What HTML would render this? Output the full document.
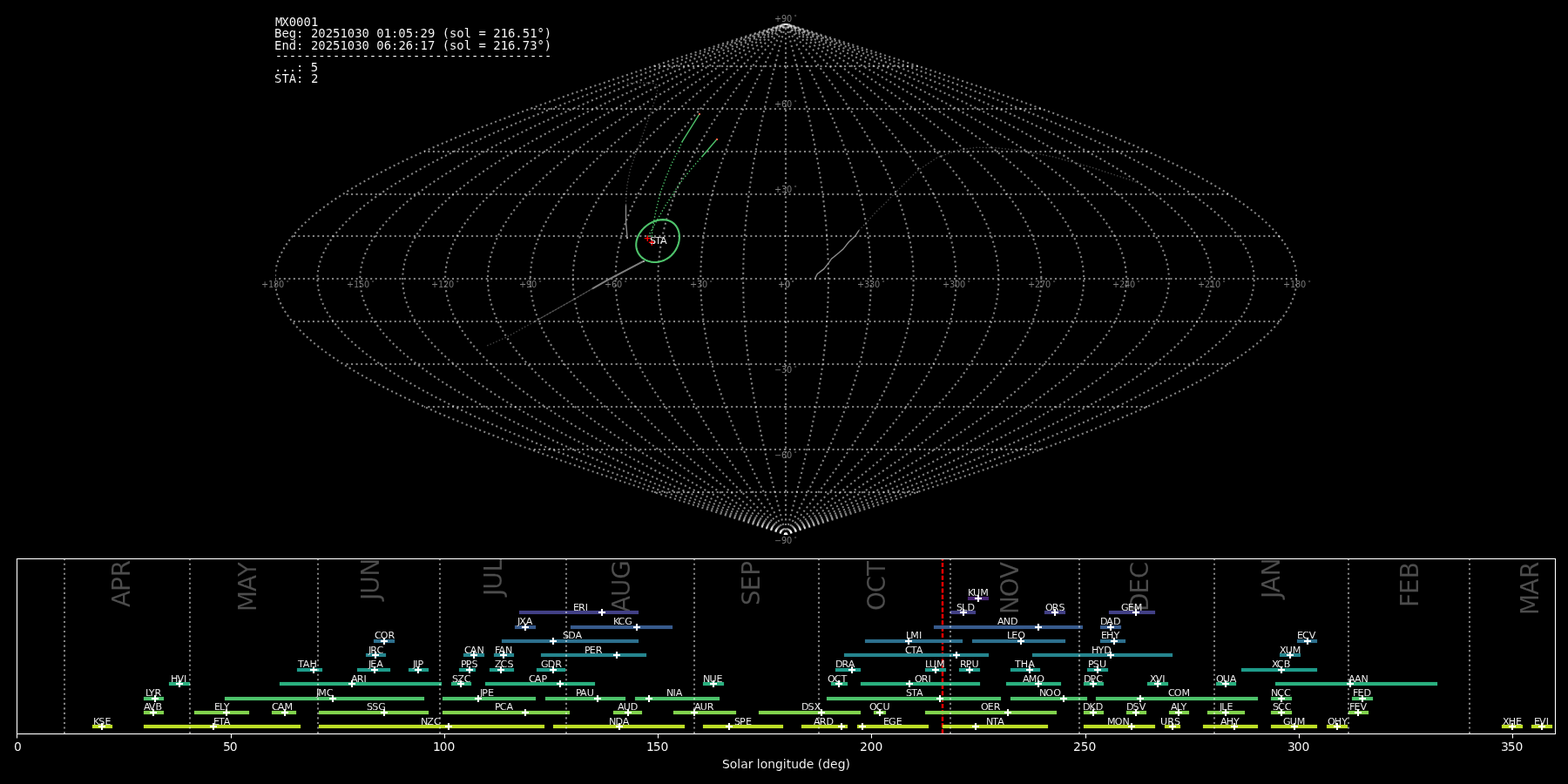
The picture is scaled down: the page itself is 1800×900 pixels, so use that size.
<!DOCTYPE html>
<html lang="en"><head><meta charset="utf-8"><title>MX0001 shower association</title>
<style>html,body{margin:0;padding:0;background:#000;}body{width:1800px;height:900px;overflow:hidden;}svg{display:block;}text{font-family:"DejaVu Sans","Liberation Sans",sans-serif;}.m{font-family:"DejaVu Sans Mono","Liberation Mono",monospace;font-size:13.889px;fill:#fff;}.m,.s,.t,.mo{stroke:#000;stroke-width:0.1;paint-order:fill stroke;}.g{fill:#808080;font-size:9.722px;}.gs{fill:#808080;font-size:6.806px;}.g,.gs{stroke:#000;stroke-width:0.05;paint-order:fill stroke;}.s{fill:#fff;font-size:11.111px;text-anchor:middle;}.s2{fill:#fff;font-size:11.111px;stroke:#000;stroke-width:0.1;paint-order:fill stroke;}.mo{fill:#fff;fill-opacity:0.3;font-size:27.778px;}.t{fill:#fff;font-size:13.889px;text-anchor:middle;}.t2{fill:#fff;font-size:13.889px;}.s3{fill:#fff;font-size:11.111px;}.s3,.t2{stroke:#000;stroke-width:0.1;paint-order:fill stroke;}.gl{fill:none;stroke:#fff;stroke-opacity:0.5;stroke-width:2.0833;stroke-dasharray:2.0833 3.4375;}.gp{fill:none;stroke:#fff;stroke-opacity:0.5;stroke-width:2;stroke-dasharray:2.0833 3.4375;}.gh{fill:none;stroke:#fff;stroke-opacity:0.0208;stroke-width:4;stroke-dasharray:2.0833 3.4375;}svg{will-change:transform;}.ml{fill:none;stroke:#fff;stroke-opacity:0.5;stroke-width:2.0833;stroke-dasharray:2.0833 3.4375;}</style></head><body>
<svg width="1800" height="900" viewBox="0 0 1800 900">
<rect x="0" y="0" width="1800" height="900" fill="#000"/>
<defs><clipPath id="ct"><rect x="316" y="27" width="1173" height="587"/></clipPath>
<clipPath id="cb"><rect x="19" y="641" width="1766" height="201"/></clipPath></defs>
<g clip-path="url(#ct)">
<path class="gh" d="M902 565H750"/>
<path class="gh" d="M1054 565H902"/>
<path class="gp" d="M902 565H750"/>
<path class="gp" d="M1054 565H902"/>
<path class="gh" d="M902 516H609"/>
<path class="gh" d="M1195 516H902"/>
<path class="gp" d="M902 516H609"/>
<path class="gp" d="M1195 516H902"/>
<path class="gh" d="M902 467H487"/>
<path class="gh" d="M1317 467H902"/>
<path class="gp" d="M902 467H487"/>
<path class="gp" d="M1317 467H902"/>
<path class="gh" d="M902 418H394"/>
<path class="gh" d="M1410 418H902"/>
<path class="gp" d="M902 418H394"/>
<path class="gp" d="M1410 418H902"/>
<path class="gh" d="M902 369H336"/>
<path class="gh" d="M1469 369H902"/>
<path class="gp" d="M902 369H336"/>
<path class="gp" d="M1469 369H902"/>
<path class="gh" d="M902 320H316"/>
<path class="gh" d="M1489 320H902"/>
<path class="gp" d="M902 320H316"/>
<path class="gp" d="M1489 320H902"/>
<path class="gh" d="M902 271H336"/>
<path class="gh" d="M1469 271H902"/>
<path class="gp" d="M902 271H336"/>
<path class="gp" d="M1469 271H902"/>
<path class="gh" d="M902 223H394"/>
<path class="gh" d="M1410 223H902"/>
<path class="gp" d="M902 223H394"/>
<path class="gp" d="M1410 223H902"/>
<path class="gh" d="M902 174H487"/>
<path class="gh" d="M1317 174H902"/>
<path class="gp" d="M902 174H487"/>
<path class="gp" d="M1317 174H902"/>
<path class="gh" d="M902 125H609"/>
<path class="gh" d="M1195 125H902"/>
<path class="gp" d="M902 125H609"/>
<path class="gp" d="M1195 125H902"/>
<path class="gh" d="M902 76H750"/>
<path class="gh" d="M1054 76H902"/>
<path class="gp" d="M902 76H750"/>
<path class="gp" d="M1054 76H902"/>
<path class="gl" d="M902 614V27"/>
<path class="gl" d="M902.05 613.57L900.5 607.64L898.95 601.72L897.4 595.79L895.86 589.87L894.33 583.94L892.8 578.02L891.28 572.09L889.77 566.17L888.28 560.24L886.8 554.32L885.33 548.39L883.88 542.47L882.45 536.55L881.04 530.62L879.65 524.7L878.29 518.77L876.94 512.85L875.62 506.92L874.33 501L873.07 495.07L871.84 489.15L870.63 483.23L869.46 477.3L868.32 471.38L867.22 465.45L866.14 459.53L865.11 453.6L864.11 447.68L863.16 441.75L862.24 435.83L861.36 429.9L860.52 423.98L859.72 418.06L858.97 412.13L858.26 406.21L857.59 400.28L856.97 394.36L856.39 388.43L855.86 382.51L855.38 376.58L854.94 370.66L854.55 364.73L854.21 358.81L853.92 352.88L853.67 346.96L853.47 341.04L853.33 335.11L853.23 329.19L853.18 323.26L853.18 317.34L853.23 311.41L853.33 305.49L853.47 299.56L853.67 293.64L853.92 287.72L854.21 281.79L854.55 275.87L854.94 269.94L855.38 264.02L855.86 258.09L856.39 252.17L856.97 246.24L857.59 240.32L858.26 234.39L858.97 228.47L859.72 222.55L860.52 216.62L861.36 210.7L862.24 204.77L863.16 198.85L864.11 192.92L865.11 187L866.14 181.07L867.22 175.15L868.32 169.22L869.46 163.3L870.63 157.38L871.84 151.45L873.07 145.53L874.33 139.6L875.62 133.68L876.94 127.75L878.29 121.83L879.65 115.9L881.04 109.98L882.45 104.05L883.88 98.13L885.33 92.21L886.8 86.28L888.28 80.36L889.77 74.43L891.28 68.51L892.8 62.58L894.33 56.66L895.86 50.73L897.4 44.81L898.95 38.88L900.5 32.96L902.05 27.03"/>
<path class="gl" d="M902.05 613.57L898.95 607.64L895.85 601.72L892.76 595.79L889.67 589.87L886.6 583.94L883.55 578.02L880.51 572.09L877.5 566.17L874.51 560.24L871.55 554.32L868.62 548.39L865.72 542.47L862.86 536.55L860.04 530.62L857.26 524.7L854.52 518.77L851.84 512.85L849.2 506.92L846.62 501L844.09 495.07L841.62 489.15L839.21 483.23L836.87 477.3L834.59 471.38L832.38 465.45L830.24 459.53L828.17 453.6L826.18 447.68L824.26 441.75L822.42 435.83L820.66 429.9L818.99 423.98L817.39 418.06L815.88 412.13L814.46 406.21L813.13 400.28L811.89 394.36L810.73 388.43L809.67 382.51L808.7 376.58L807.83 370.66L807.05 364.73L806.37 358.81L805.78 352.88L805.29 346.96L804.9 341.04L804.6 335.11L804.41 329.19L804.31 323.26L804.31 317.34L804.41 311.41L804.6 305.49L804.9 299.56L805.29 293.64L805.78 287.72L806.37 281.79L807.05 275.87L807.83 269.94L808.7 264.02L809.67 258.09L810.73 252.17L811.89 246.24L813.13 240.32L814.46 234.39L815.88 228.47L817.39 222.55L818.99 216.62L820.66 210.7L822.42 204.77L824.26 198.85L826.18 192.92L828.17 187L830.24 181.07L832.38 175.15L834.59 169.22L836.87 163.3L839.21 157.38L841.62 151.45L844.09 145.53L846.62 139.6L849.2 133.68L851.84 127.75L854.52 121.83L857.26 115.9L860.04 109.98L862.86 104.05L865.72 98.13L868.62 92.21L871.55 86.28L874.51 80.36L877.5 74.43L880.51 68.51L883.55 62.58L886.6 56.66L889.67 50.73L892.76 44.81L895.85 38.88L898.95 32.96L902.05 27.03"/>
<path class="gl" d="M902.05 613.57L897.4 607.64L892.75 601.72L888.11 595.79L883.49 589.87L878.88 583.94L874.3 578.02L869.75 572.09L865.22 566.17L860.74 560.24L856.3 554.32L851.9 548.39L847.55 542.47L843.26 536.55L839.03 530.62L834.86 524.7L830.76 518.77L826.73 512.85L822.77 506.92L818.9 501L815.11 495.07L811.41 489.15L807.8 483.23L804.28 477.3L800.86 471.38L797.55 465.45L794.33 459.53L791.23 453.6L788.24 447.68L785.37 441.75L782.61 435.83L779.97 429.9L777.45 423.98L775.06 418.06L772.8 412.13L770.67 406.21L768.67 400.28L766.8 394.36L765.07 388.43L763.48 382.51L762.03 376.58L760.72 370.66L759.55 364.73L758.53 358.81L757.65 352.88L756.91 346.96L756.32 341.04L755.88 335.11L755.58 329.19L755.44 323.26L755.44 317.34L755.58 311.41L755.88 305.49L756.32 299.56L756.91 293.64L757.65 287.72L758.53 281.79L759.55 275.87L760.72 269.94L762.03 264.02L763.48 258.09L765.07 252.17L766.8 246.24L768.67 240.32L770.67 234.39L772.8 228.47L775.06 222.55L777.45 216.62L779.97 210.7L782.61 204.77L785.37 198.85L788.24 192.92L791.23 187L794.33 181.07L797.55 175.15L800.86 169.22L804.28 163.3L807.8 157.38L811.41 151.45L815.11 145.53L818.9 139.6L822.77 133.68L826.73 127.75L830.76 121.83L834.86 115.9L839.03 109.98L843.26 104.05L847.55 98.13L851.9 92.21L856.3 86.28L860.74 80.36L865.22 74.43L869.75 68.51L874.3 62.58L878.88 56.66L883.49 50.73L888.11 44.81L892.75 38.88L897.4 32.96L902.05 27.03"/>
<path class="gl" d="M902.05 613.57L895.85 607.64L889.65 601.72L883.47 595.79L877.3 589.87L871.16 583.94L865.05 578.02L858.98 572.09L852.95 566.17L846.97 560.24L841.04 554.32L835.18 548.39L829.39 542.47L823.66 536.55L818.02 530.62L812.46 524.7L806.99 518.77L801.62 512.85L796.35 506.92L791.18 501L786.13 495.07L781.19 489.15L776.38 483.23L771.69 477.3L767.13 471.38L762.71 465.45L758.43 459.53L754.29 453.6L750.31 447.68L746.47 441.75L742.79 435.83L739.27 429.9L735.92 423.98L732.73 418.06L729.72 412.13L726.87 406.21L724.21 400.28L721.72 394.36L719.41 388.43L717.29 382.51L715.36 376.58L713.61 370.66L712.05 364.73L710.68 358.81L709.51 352.88L708.53 346.96L707.74 341.04L707.15 335.11L706.76 329.19L706.56 323.26L706.56 317.34L706.76 311.41L707.15 305.49L707.74 299.56L708.53 293.64L709.51 287.72L710.68 281.79L712.05 275.87L713.61 269.94L715.36 264.02L717.29 258.09L719.41 252.17L721.72 246.24L724.21 240.32L726.87 234.39L729.72 228.47L732.73 222.55L735.92 216.62L739.27 210.7L742.79 204.77L746.47 198.85L750.31 192.92L754.29 187L758.43 181.07L762.71 175.15L767.13 169.22L771.69 163.3L776.38 157.38L781.19 151.45L786.13 145.53L791.18 139.6L796.35 133.68L801.62 127.75L806.99 121.83L812.46 115.9L818.02 109.98L823.66 104.05L829.39 98.13L835.18 92.21L841.04 86.28L846.97 80.36L852.95 74.43L858.98 68.51L865.05 62.58L871.16 56.66L877.3 50.73L883.47 44.81L889.65 38.88L895.85 32.96L902.05 27.03"/>
<path class="gl" d="M902.05 613.57L894.3 607.64L886.55 601.72L878.82 595.79L871.11 589.87L863.44 583.94L855.8 578.02L848.21 572.09L840.67 566.17L833.2 560.24L825.79 554.32L818.46 548.39L811.22 542.47L804.07 536.55L797.01 530.62L790.07 524.7L783.23 518.77L776.51 512.85L769.92 506.92L763.47 501L757.15 495.07L750.98 489.15L744.96 483.23L739.1 477.3L733.4 471.38L727.88 465.45L722.52 459.53L717.35 453.6L712.37 447.68L707.58 441.75L702.98 435.83L698.58 429.9L694.39 423.98L690.4 418.06L686.63 412.13L683.08 406.21L679.75 400.28L676.64 394.36L673.76 388.43L671.1 382.51L668.68 376.58L666.5 370.66L664.55 364.73L662.84 358.81L661.38 352.88L660.15 346.96L659.17 341.04L658.43 335.11L657.94 329.19L657.69 323.26L657.69 317.34L657.94 311.41L658.43 305.49L659.17 299.56L660.15 293.64L661.38 287.72L662.84 281.79L664.55 275.87L666.5 269.94L668.68 264.02L671.1 258.09L673.76 252.17L676.64 246.24L679.75 240.32L683.08 234.39L686.63 228.47L690.4 222.55L694.39 216.62L698.58 210.7L702.98 204.77L707.58 198.85L712.37 192.92L717.35 187L722.52 181.07L727.88 175.15L733.4 169.22L739.1 163.3L744.96 157.38L750.98 151.45L757.15 145.53L763.47 139.6L769.92 133.68L776.51 127.75L783.23 121.83L790.07 115.9L797.01 109.98L804.07 104.05L811.22 98.13L818.46 92.21L825.79 86.28L833.2 80.36L840.67 74.43L848.21 68.51L855.8 62.58L863.44 56.66L871.11 50.73L878.82 44.81L886.55 38.88L894.3 32.96L902.05 27.03"/>
<path class="gl" d="M902.05 613.57L892.75 607.64L883.45 601.72L874.17 595.79L864.92 589.87L855.71 583.94L846.55 578.02L837.44 572.09L828.4 566.17L819.43 560.24L810.54 554.32L801.75 548.39L793.05 542.47L784.47 536.55L776.01 530.62L767.67 524.7L759.47 518.77L751.41 512.85L743.5 506.92L735.75 501L728.17 495.07L720.77 489.15L713.54 483.23L706.51 477.3L699.67 471.38L693.04 465.45L686.62 459.53L680.42 453.6L674.43 447.68L668.68 441.75L663.16 435.83L657.89 429.9L652.86 423.98L648.08 418.06L643.55 412.13L639.29 406.21L635.29 400.28L631.56 394.36L628.1 388.43L624.91 382.51L622.01 376.58L619.39 370.66L617.05 364.73L615 358.81L613.24 352.88L611.77 346.96L610.59 341.04L609.71 335.11L609.12 329.19L608.82 323.26L608.82 317.34L609.12 311.41L609.71 305.49L610.59 299.56L611.77 293.64L613.24 287.72L615 281.79L617.05 275.87L619.39 269.94L622.01 264.02L624.91 258.09L628.1 252.17L631.56 246.24L635.29 240.32L639.29 234.39L643.55 228.47L648.08 222.55L652.86 216.62L657.89 210.7L663.16 204.77L668.68 198.85L674.43 192.92L680.42 187L686.62 181.07L693.04 175.15L699.67 169.22L706.51 163.3L713.54 157.38L720.77 151.45L728.17 145.53L735.75 139.6L743.5 133.68L751.41 127.75L759.47 121.83L767.67 115.9L776.01 109.98L784.47 104.05L793.05 98.13L801.75 92.21L810.54 86.28L819.43 80.36L828.4 74.43L837.44 68.51L846.55 62.58L855.71 56.66L864.92 50.73L874.17 44.81L883.45 38.88L892.75 32.96L902.05 27.03"/>
<path class="gl" d="M902.05 613.57L891.19 607.64L880.35 601.72L869.53 595.79L858.74 589.87L847.99 583.94L837.3 578.02L826.67 572.09L816.12 566.17L805.66 560.24L795.29 554.32L785.03 548.39L774.89 542.47L764.87 536.55L755 530.62L745.27 524.7L735.7 518.77L726.3 512.85L717.07 506.92L708.03 501L699.19 495.07L690.55 489.15L682.13 483.23L673.92 477.3L665.94 471.38L658.21 465.45L650.71 459.53L643.48 453.6L636.5 447.68L629.79 441.75L623.35 435.83L617.19 429.9L611.32 423.98L605.75 418.06L600.47 412.13L595.49 406.21L590.83 400.28L586.47 394.36L582.44 388.43L578.73 382.51L575.34 376.58L572.28 370.66L569.55 364.73L567.16 358.81L565.11 352.88L563.39 346.96L562.02 341.04L560.98 335.11L560.3 329.19L559.95 323.26L559.95 317.34L560.3 311.41L560.98 305.49L562.02 299.56L563.39 293.64L565.11 287.72L567.16 281.79L569.55 275.87L572.28 269.94L575.34 264.02L578.73 258.09L582.44 252.17L586.47 246.24L590.83 240.32L595.49 234.39L600.47 228.47L605.75 222.55L611.32 216.62L617.19 210.7L623.35 204.77L629.79 198.85L636.5 192.92L643.48 187L650.71 181.07L658.21 175.15L665.94 169.22L673.92 163.3L682.13 157.38L690.55 151.45L699.19 145.53L708.03 139.6L717.07 133.68L726.3 127.75L735.7 121.83L745.27 115.9L755 109.98L764.87 104.05L774.89 98.13L785.03 92.21L795.29 86.28L805.66 80.36L816.12 74.43L826.67 68.51L837.3 62.58L847.99 56.66L858.74 50.73L869.53 44.81L880.35 38.88L891.19 32.96L902.05 27.03"/>
<path class="gl" d="M902.05 613.57L889.64 607.64L877.25 601.72L864.88 595.79L852.55 589.87L840.27 583.94L828.05 578.02L815.9 572.09L803.85 566.17L791.89 560.24L780.04 554.32L768.31 548.39L756.72 542.47L745.28 536.55L733.99 530.62L722.87 524.7L711.94 518.77L701.19 512.85L690.65 506.92L680.32 501L670.21 495.07L660.34 489.15L650.71 483.23L641.33 477.3L632.22 471.38L623.37 465.45L614.81 459.53L606.54 453.6L598.56 447.68L590.89 441.75L583.53 435.83L576.5 429.9L569.79 423.98L563.42 418.06L557.38 412.13L551.7 406.21L546.37 400.28L541.39 394.36L536.78 388.43L532.54 382.51L528.66 376.58L525.17 370.66L522.05 364.73L519.32 358.81L516.97 352.88L515.01 346.96L513.44 341.04L512.26 335.11L511.47 329.19L511.08 323.26L511.08 317.34L511.47 311.41L512.26 305.49L513.44 299.56L515.01 293.64L516.97 287.72L519.32 281.79L522.05 275.87L525.17 269.94L528.66 264.02L532.54 258.09L536.78 252.17L541.39 246.24L546.37 240.32L551.7 234.39L557.38 228.47L563.42 222.55L569.79 216.62L576.5 210.7L583.53 204.77L590.89 198.85L598.56 192.92L606.54 187L614.81 181.07L623.37 175.15L632.22 169.22L641.33 163.3L650.71 157.38L660.34 151.45L670.21 145.53L680.32 139.6L690.65 133.68L701.19 127.75L711.94 121.83L722.87 115.9L733.99 109.98L745.28 104.05L756.72 98.13L768.31 92.21L780.04 86.28L791.89 80.36L803.85 74.43L815.9 68.51L828.05 62.58L840.27 56.66L852.55 50.73L864.88 44.81L877.25 38.88L889.64 32.96L902.05 27.03"/>
<path class="gl" d="M902.05 613.57L888.09 607.64L874.15 601.72L860.24 595.79L846.36 589.87L832.55 583.94L818.8 578.02L805.14 572.09L791.57 566.17L778.12 560.24L764.79 554.32L751.6 548.39L738.56 542.47L725.68 536.55L712.98 530.62L700.48 524.7L688.17 518.77L676.08 512.85L664.22 506.92L652.6 501L641.23 495.07L630.12 489.15L619.29 483.23L608.74 477.3L598.49 471.38L588.54 465.45L578.9 459.53L569.6 453.6L560.63 447.68L552 441.75L543.72 435.83L535.8 429.9L528.26 423.98L521.09 418.06L514.3 412.13L507.9 406.21L501.91 400.28L496.31 394.36L491.12 388.43L486.35 382.51L481.99 376.58L478.06 370.66L474.55 364.73L471.48 358.81L468.84 352.88L466.63 346.96L464.86 341.04L463.54 335.11L462.65 329.19L462.21 323.26L462.21 317.34L462.65 311.41L463.54 305.49L464.86 299.56L466.63 293.64L468.84 287.72L471.48 281.79L474.55 275.87L478.06 269.94L481.99 264.02L486.35 258.09L491.12 252.17L496.31 246.24L501.91 240.32L507.9 234.39L514.3 228.47L521.09 222.55L528.26 216.62L535.8 210.7L543.72 204.77L552 198.85L560.63 192.92L569.6 187L578.9 181.07L588.54 175.15L598.49 169.22L608.74 163.3L619.29 157.38L630.12 151.45L641.23 145.53L652.6 139.6L664.22 133.68L676.08 127.75L688.17 121.83L700.48 115.9L712.98 109.98L725.68 104.05L738.56 98.13L751.6 92.21L764.79 86.28L778.12 80.36L791.57 74.43L805.14 68.51L818.8 62.58L832.55 56.66L846.36 50.73L860.24 44.81L874.15 38.88L888.09 32.96L902.05 27.03"/>
<path class="gl" d="M902.05 613.57L886.54 607.64L871.05 601.72L855.59 595.79L840.17 589.87L824.82 583.94L809.55 578.02L794.37 572.09L779.3 566.17L764.35 560.24L749.54 554.32L734.88 548.39L720.39 542.47L706.09 536.55L691.98 530.62L678.08 524.7L664.41 518.77L650.98 512.85L637.8 506.92L624.89 501L612.25 495.07L599.91 489.15L587.87 483.23L576.15 477.3L564.76 471.38L553.7 465.45L543 459.53L532.66 453.6L522.69 447.68L513.1 441.75L503.91 435.83L495.11 429.9L486.73 423.98L478.76 418.06L471.22 412.13L464.11 406.21L457.44 400.28L451.23 394.36L445.46 388.43L440.16 382.51L435.32 376.58L430.95 370.66L427.05 364.73L423.64 358.81L420.7 352.88L418.25 346.96L416.29 341.04L414.81 335.11L413.83 329.19L413.34 323.26L413.34 317.34L413.83 311.41L414.81 305.49L416.29 299.56L418.25 293.64L420.7 287.72L423.64 281.79L427.05 275.87L430.95 269.94L435.32 264.02L440.16 258.09L445.46 252.17L451.23 246.24L457.44 240.32L464.11 234.39L471.22 228.47L478.76 222.55L486.73 216.62L495.11 210.7L503.91 204.77L513.1 198.85L522.69 192.92L532.66 187L543 181.07L553.7 175.15L564.76 169.22L576.15 163.3L587.87 157.38L599.91 151.45L612.25 145.53L624.89 139.6L637.8 133.68L650.98 127.75L664.41 121.83L678.08 115.9L691.98 109.98L706.09 104.05L720.39 98.13L734.88 92.21L749.54 86.28L764.35 80.36L779.3 74.43L794.37 68.51L809.55 62.58L824.82 56.66L840.17 50.73L855.59 44.81L871.05 38.88L886.54 32.96L902.05 27.03"/>
<path class="gl" d="M902.05 613.57L884.99 607.64L867.95 601.72L850.94 595.79L833.99 589.87L817.1 583.94L800.3 578.02L783.6 572.09L767.02 566.17L750.58 560.24L734.28 554.32L718.16 548.39L702.22 542.47L686.49 536.55L670.97 530.62L655.68 524.7L640.65 518.77L625.87 512.85L611.37 506.92L597.17 501L583.27 495.07L569.7 489.15L556.45 483.23L543.56 477.3L531.03 471.38L518.87 465.45L507.09 459.53L495.72 453.6L484.75 447.68L474.21 441.75L464.09 435.83L454.42 429.9L445.19 423.98L436.43 418.06L428.13 412.13L420.32 406.21L412.98 400.28L406.14 394.36L399.8 388.43L393.97 382.51L388.64 376.58L383.84 370.66L379.55 364.73L375.79 358.81L372.57 352.88L369.87 346.96L367.71 341.04L366.09 335.11L365.01 329.19L364.47 323.26L364.47 317.34L365.01 311.41L366.09 305.49L367.71 299.56L369.87 293.64L372.57 287.72L375.79 281.79L379.55 275.87L383.84 269.94L388.64 264.02L393.97 258.09L399.8 252.17L406.14 246.24L412.98 240.32L420.32 234.39L428.13 228.47L436.43 222.55L445.19 216.62L454.42 210.7L464.09 204.77L474.21 198.85L484.75 192.92L495.72 187L507.09 181.07L518.87 175.15L531.03 169.22L543.56 163.3L556.45 157.38L569.7 151.45L583.27 145.53L597.17 139.6L611.37 133.68L625.87 127.75L640.65 121.83L655.68 115.9L670.97 109.98L686.49 104.05L702.22 98.13L718.16 92.21L734.28 86.28L750.58 80.36L767.02 74.43L783.6 68.51L800.3 62.58L817.1 56.66L833.99 50.73L850.94 44.81L867.95 38.88L884.99 32.96L902.05 27.03"/>
<path class="gl" d="M902.05 613.57L883.44 607.64L864.85 601.72L846.3 595.79L827.8 589.87L809.38 583.94L791.05 578.02L772.83 572.09L754.74 566.17L736.81 560.24L719.03 554.32L701.44 548.39L684.06 542.47L666.89 536.55L649.96 530.62L633.29 524.7L616.88 518.77L600.76 512.85L584.95 506.92L569.45 501L554.29 495.07L539.48 489.15L525.04 483.23L510.97 477.3L497.3 471.38L484.03 465.45L471.19 459.53L458.78 453.6L446.82 447.68L435.31 441.75L424.28 435.83L413.72 429.9L403.66 423.98L394.1 418.06L385.05 412.13L376.52 406.21L368.52 400.28L361.06 394.36L354.14 388.43L347.78 382.51L341.97 376.58L336.73 370.66L332.05 364.73L327.95 358.81L324.43 352.88L321.49 346.96L319.13 341.04L317.36 335.11L316.18 329.19L315.59 323.26L315.59 317.34L316.18 311.41L317.36 305.49L319.13 299.56L321.49 293.64L324.43 287.72L327.95 281.79L332.05 275.87L336.73 269.94L341.97 264.02L347.78 258.09L354.14 252.17L361.06 246.24L368.52 240.32L376.52 234.39L385.05 228.47L394.1 222.55L403.66 216.62L413.72 210.7L424.28 204.77L435.31 198.85L446.82 192.92L458.78 187L471.19 181.07L484.03 175.15L497.3 169.22L510.97 163.3L525.04 157.38L539.48 151.45L554.29 145.53L569.45 139.6L584.95 133.68L600.76 127.75L616.88 121.83L633.29 115.9L649.96 109.98L666.89 104.05L684.06 98.13L701.44 92.21L719.03 86.28L736.81 80.36L754.74 74.43L772.83 68.51L791.05 62.58L809.38 56.66L827.8 50.73L846.3 44.81L864.85 38.88L883.44 32.96L902.05 27.03"/>
<path class="gl" d="M902.05 613.57L920.66 607.64L939.25 601.72L957.8 595.79L976.3 589.87L994.72 583.94L1013.05 578.02L1031.27 572.09L1049.36 566.17L1067.29 560.24L1085.07 554.32L1102.65 548.39L1120.04 542.47L1137.21 536.55L1154.14 530.62L1170.81 524.7L1187.22 518.77L1203.34 512.85L1219.15 506.92L1234.65 501L1249.81 495.07L1264.62 489.15L1279.06 483.23L1293.13 477.3L1306.8 471.38L1320.07 465.45L1332.91 459.53L1345.32 453.6L1357.28 447.68L1368.79 441.75L1379.82 435.83L1390.38 429.9L1400.44 423.98L1410 418.06L1419.05 412.13L1427.58 406.21L1435.58 400.28L1443.04 394.36L1449.96 388.43L1456.32 382.51L1462.13 376.58L1467.37 370.66L1472.05 364.73L1476.15 358.81L1479.67 352.88L1482.61 346.96L1484.97 341.04L1486.73 335.11L1487.92 329.19L1488.51 323.26L1488.51 317.34L1487.92 311.41L1486.73 305.49L1484.97 299.56L1482.61 293.64L1479.67 287.72L1476.15 281.79L1472.05 275.87L1467.37 269.94L1462.13 264.02L1456.32 258.09L1449.96 252.17L1443.04 246.24L1435.58 240.32L1427.58 234.39L1419.05 228.47L1410 222.55L1400.44 216.62L1390.38 210.7L1379.82 204.77L1368.79 198.85L1357.28 192.92L1345.32 187L1332.91 181.07L1320.07 175.15L1306.8 169.22L1293.13 163.3L1279.06 157.38L1264.62 151.45L1249.81 145.53L1234.65 139.6L1219.15 133.68L1203.34 127.75L1187.22 121.83L1170.81 115.9L1154.14 109.98L1137.21 104.05L1120.04 98.13L1102.65 92.21L1085.07 86.28L1067.29 80.36L1049.36 74.43L1031.27 68.51L1013.05 62.58L994.72 56.66L976.3 50.73L957.8 44.81L939.25 38.88L920.66 32.96L902.05 27.03"/>
<path class="gl" d="M902.05 613.57L919.11 607.64L936.15 601.72L953.16 595.79L970.11 589.87L987 583.94L1003.8 578.02L1020.5 572.09L1037.08 566.17L1053.52 560.24L1069.82 554.32L1085.94 548.39L1101.88 542.47L1117.61 536.55L1133.13 530.62L1148.42 524.7L1163.45 518.77L1178.23 512.85L1192.73 506.92L1206.93 501L1220.83 495.07L1234.4 489.15L1247.65 483.23L1260.54 477.3L1273.07 471.38L1285.23 465.45L1297.01 459.53L1308.38 453.6L1319.35 447.68L1329.89 441.75L1340.01 435.83L1349.68 429.9L1358.91 423.98L1367.67 418.06L1375.97 412.13L1383.78 406.21L1391.12 400.28L1397.96 394.36L1404.3 388.43L1410.13 382.51L1415.46 376.58L1420.26 370.66L1424.55 364.73L1428.31 358.81L1431.53 352.88L1434.23 346.96L1436.39 341.04L1438.01 335.11L1439.09 329.19L1439.63 323.26L1439.63 317.34L1439.09 311.41L1438.01 305.49L1436.39 299.56L1434.23 293.64L1431.53 287.72L1428.31 281.79L1424.55 275.87L1420.26 269.94L1415.46 264.02L1410.13 258.09L1404.3 252.17L1397.96 246.24L1391.12 240.32L1383.78 234.39L1375.97 228.47L1367.67 222.55L1358.91 216.62L1349.68 210.7L1340.01 204.77L1329.89 198.85L1319.35 192.92L1308.38 187L1297.01 181.07L1285.23 175.15L1273.07 169.22L1260.54 163.3L1247.65 157.38L1234.4 151.45L1220.83 145.53L1206.93 139.6L1192.73 133.68L1178.23 127.75L1163.45 121.83L1148.42 115.9L1133.13 109.98L1117.61 104.05L1101.88 98.13L1085.94 92.21L1069.82 86.28L1053.52 80.36L1037.08 74.43L1020.5 68.51L1003.8 62.58L987 56.66L970.11 50.73L953.16 44.81L936.15 38.88L919.11 32.96L902.05 27.03"/>
<path class="gl" d="M902.05 613.57L917.56 607.64L933.05 601.72L948.51 595.79L963.93 589.87L979.28 583.94L994.55 578.02L1009.73 572.09L1024.8 566.17L1039.75 560.24L1054.56 554.32L1069.22 548.39L1083.71 542.47L1098.01 536.55L1112.12 530.62L1126.02 524.7L1139.69 518.77L1153.12 512.85L1166.3 506.92L1179.21 501L1191.85 495.07L1204.19 489.15L1216.23 483.23L1227.95 477.3L1239.34 471.38L1250.4 465.45L1261.1 459.53L1271.44 453.6L1281.41 447.68L1291 441.75L1300.19 435.83L1308.99 429.9L1317.37 423.98L1325.34 418.06L1332.88 412.13L1339.99 406.21L1346.66 400.28L1352.87 394.36L1358.64 388.43L1363.94 382.51L1368.78 376.58L1373.15 370.66L1377.05 364.73L1380.46 358.81L1383.4 352.88L1385.85 346.96L1387.81 341.04L1389.29 335.11L1390.27 329.19L1390.76 323.26L1390.76 317.34L1390.27 311.41L1389.29 305.49L1387.81 299.56L1385.85 293.64L1383.4 287.72L1380.46 281.79L1377.05 275.87L1373.15 269.94L1368.78 264.02L1363.94 258.09L1358.64 252.17L1352.87 246.24L1346.66 240.32L1339.99 234.39L1332.88 228.47L1325.34 222.55L1317.37 216.62L1308.99 210.7L1300.19 204.77L1291 198.85L1281.41 192.92L1271.44 187L1261.1 181.07L1250.4 175.15L1239.34 169.22L1227.95 163.3L1216.23 157.38L1204.19 151.45L1191.85 145.53L1179.21 139.6L1166.3 133.68L1153.12 127.75L1139.69 121.83L1126.02 115.9L1112.12 109.98L1098.01 104.05L1083.71 98.13L1069.22 92.21L1054.56 86.28L1039.75 80.36L1024.8 74.43L1009.73 68.51L994.55 62.58L979.28 56.66L963.93 50.73L948.51 44.81L933.05 38.88L917.56 32.96L902.05 27.03"/>
<path class="gl" d="M902.05 613.57L916.01 607.64L929.95 601.72L943.86 595.79L957.74 589.87L971.55 583.94L985.3 578.02L998.96 572.09L1012.53 566.17L1025.98 560.24L1039.31 554.32L1052.5 548.39L1065.54 542.47L1078.42 536.55L1091.12 530.62L1103.62 524.7L1115.93 518.77L1128.02 512.85L1139.88 506.92L1151.5 501L1162.87 495.07L1173.98 489.15L1184.81 483.23L1195.36 477.3L1205.61 471.38L1215.56 465.45L1225.2 459.53L1234.5 453.6L1243.47 447.68L1252.1 441.75L1260.38 435.83L1268.3 429.9L1275.84 423.98L1283.01 418.06L1289.8 412.13L1296.2 406.21L1302.19 400.28L1307.79 394.36L1312.98 388.43L1317.75 382.51L1322.11 376.58L1326.04 370.66L1329.55 364.73L1332.62 358.81L1335.26 352.88L1337.47 346.96L1339.24 341.04L1340.56 335.11L1341.45 329.19L1341.89 323.26L1341.89 317.34L1341.45 311.41L1340.56 305.49L1339.24 299.56L1337.47 293.64L1335.26 287.72L1332.62 281.79L1329.55 275.87L1326.04 269.94L1322.11 264.02L1317.75 258.09L1312.98 252.17L1307.79 246.24L1302.19 240.32L1296.2 234.39L1289.8 228.47L1283.01 222.55L1275.84 216.62L1268.3 210.7L1260.38 204.77L1252.1 198.85L1243.47 192.92L1234.5 187L1225.2 181.07L1215.56 175.15L1205.61 169.22L1195.36 163.3L1184.81 157.38L1173.98 151.45L1162.87 145.53L1151.5 139.6L1139.88 133.68L1128.02 127.75L1115.93 121.83L1103.62 115.9L1091.12 109.98L1078.42 104.05L1065.54 98.13L1052.5 92.21L1039.31 86.28L1025.98 80.36L1012.53 74.43L998.96 68.51L985.3 62.58L971.55 56.66L957.74 50.73L943.86 44.81L929.95 38.88L916.01 32.96L902.05 27.03"/>
<path class="gl" d="M902.05 613.57L914.46 607.64L926.85 601.72L939.22 595.79L951.55 589.87L963.83 583.94L976.05 578.02L988.2 572.09L1000.25 566.17L1012.21 560.24L1024.06 554.32L1035.79 548.39L1047.38 542.47L1058.82 536.55L1070.11 530.62L1081.23 524.7L1092.16 518.77L1102.91 512.85L1113.45 506.92L1123.78 501L1133.89 495.07L1143.76 489.15L1153.39 483.23L1162.77 477.3L1171.88 471.38L1180.73 465.45L1189.29 459.53L1197.56 453.6L1205.54 447.68L1213.21 441.75L1220.57 435.83L1227.6 429.9L1234.31 423.98L1240.68 418.06L1246.72 412.13L1252.4 406.21L1257.73 400.28L1262.71 394.36L1267.32 388.43L1271.56 382.51L1275.44 376.58L1278.93 370.66L1282.05 364.73L1284.78 358.81L1287.13 352.88L1289.09 346.96L1290.66 341.04L1291.84 335.11L1292.63 329.19L1293.02 323.26L1293.02 317.34L1292.63 311.41L1291.84 305.49L1290.66 299.56L1289.09 293.64L1287.13 287.72L1284.78 281.79L1282.05 275.87L1278.93 269.94L1275.44 264.02L1271.56 258.09L1267.32 252.17L1262.71 246.24L1257.73 240.32L1252.4 234.39L1246.72 228.47L1240.68 222.55L1234.31 216.62L1227.6 210.7L1220.57 204.77L1213.21 198.85L1205.54 192.92L1197.56 187L1189.29 181.07L1180.73 175.15L1171.88 169.22L1162.77 163.3L1153.39 157.38L1143.76 151.45L1133.89 145.53L1123.78 139.6L1113.45 133.68L1102.91 127.75L1092.16 121.83L1081.23 115.9L1070.11 109.98L1058.82 104.05L1047.38 98.13L1035.79 92.21L1024.06 86.28L1012.21 80.36L1000.25 74.43L988.2 68.51L976.05 62.58L963.83 56.66L951.55 50.73L939.22 44.81L926.85 38.88L914.46 32.96L902.05 27.03"/>
<path class="gl" d="M902.05 613.57L912.91 607.64L923.75 601.72L934.57 595.79L945.36 589.87L956.11 583.94L966.8 578.02L977.43 572.09L987.98 566.17L998.44 560.24L1008.81 554.32L1019.07 548.39L1029.21 542.47L1039.23 536.55L1049.1 530.62L1058.83 524.7L1068.4 518.77L1077.8 512.85L1087.03 506.92L1096.07 501L1104.91 495.07L1113.55 489.15L1121.97 483.23L1130.18 477.3L1138.16 471.38L1145.89 465.45L1153.39 459.53L1160.62 453.6L1167.6 447.68L1174.31 441.75L1180.75 435.83L1186.91 429.9L1192.78 423.98L1198.35 418.06L1203.63 412.13L1208.61 406.21L1213.27 400.28L1217.63 394.36L1221.66 388.43L1225.37 382.51L1228.76 376.58L1231.82 370.66L1234.55 364.73L1236.94 358.81L1238.99 352.88L1240.71 346.96L1242.08 341.04L1243.12 335.11L1243.8 329.19L1244.15 323.26L1244.15 317.34L1243.8 311.41L1243.12 305.49L1242.08 299.56L1240.71 293.64L1238.99 287.72L1236.94 281.79L1234.55 275.87L1231.82 269.94L1228.76 264.02L1225.37 258.09L1221.66 252.17L1217.63 246.24L1213.27 240.32L1208.61 234.39L1203.63 228.47L1198.35 222.55L1192.78 216.62L1186.91 210.7L1180.75 204.77L1174.31 198.85L1167.6 192.92L1160.62 187L1153.39 181.07L1145.89 175.15L1138.16 169.22L1130.18 163.3L1121.97 157.38L1113.55 151.45L1104.91 145.53L1096.07 139.6L1087.03 133.68L1077.8 127.75L1068.4 121.83L1058.83 115.9L1049.1 109.98L1039.23 104.05L1029.21 98.13L1019.07 92.21L1008.81 86.28L998.44 80.36L987.98 74.43L977.43 68.51L966.8 62.58L956.11 56.66L945.36 50.73L934.57 44.81L923.75 38.88L912.91 32.96L902.05 27.03"/>
<path class="gl" d="M902.05 613.57L911.35 607.64L920.65 601.72L929.93 595.79L939.18 589.87L948.39 583.94L957.55 578.02L966.66 572.09L975.7 566.17L984.67 560.24L993.56 554.32L1002.35 548.39L1011.05 542.47L1019.63 536.55L1028.09 530.62L1036.43 524.7L1044.63 518.77L1052.69 512.85L1060.6 506.92L1068.35 501L1075.93 495.07L1083.33 489.15L1090.56 483.23L1097.59 477.3L1104.43 471.38L1111.06 465.45L1117.48 459.53L1123.68 453.6L1129.67 447.68L1135.42 441.75L1140.94 435.83L1146.21 429.9L1151.24 423.98L1156.02 418.06L1160.55 412.13L1164.81 406.21L1168.81 400.28L1172.54 394.36L1176 388.43L1179.19 382.51L1182.09 376.58L1184.71 370.66L1187.05 364.73L1189.1 358.81L1190.86 352.88L1192.33 346.96L1193.51 341.04L1194.39 335.11L1194.98 329.19L1195.28 323.26L1195.28 317.34L1194.98 311.41L1194.39 305.49L1193.51 299.56L1192.33 293.64L1190.86 287.72L1189.1 281.79L1187.05 275.87L1184.71 269.94L1182.09 264.02L1179.19 258.09L1176 252.17L1172.54 246.24L1168.81 240.32L1164.81 234.39L1160.55 228.47L1156.02 222.55L1151.24 216.62L1146.21 210.7L1140.94 204.77L1135.42 198.85L1129.67 192.92L1123.68 187L1117.48 181.07L1111.06 175.15L1104.43 169.22L1097.59 163.3L1090.56 157.38L1083.33 151.45L1075.93 145.53L1068.35 139.6L1060.6 133.68L1052.69 127.75L1044.63 121.83L1036.43 115.9L1028.09 109.98L1019.63 104.05L1011.05 98.13L1002.35 92.21L993.56 86.28L984.67 80.36L975.7 74.43L966.66 68.51L957.55 62.58L948.39 56.66L939.18 50.73L929.93 44.81L920.65 38.88L911.35 32.96L902.05 27.03"/>
<path class="gl" d="M902.05 613.57L909.8 607.64L917.55 601.72L925.28 595.79L932.99 589.87L940.66 583.94L948.3 578.02L955.89 572.09L963.43 566.17L970.9 560.24L978.31 554.32L985.64 548.39L992.88 542.47L1000.03 536.55L1007.09 530.62L1014.03 524.7L1020.87 518.77L1027.59 512.85L1034.18 506.92L1040.63 501L1046.95 495.07L1053.12 489.15L1059.14 483.23L1065 477.3L1070.7 471.38L1076.22 465.45L1081.58 459.53L1086.75 453.6L1091.73 447.68L1096.52 441.75L1101.12 435.83L1105.52 429.9L1109.71 423.98L1113.7 418.06L1117.47 412.13L1121.02 406.21L1124.35 400.28L1127.46 394.36L1130.34 388.43L1133 382.51L1135.42 376.58L1137.6 370.66L1139.55 364.73L1141.26 358.81L1142.72 352.88L1143.95 346.96L1144.93 341.04L1145.67 335.11L1146.16 329.19L1146.41 323.26L1146.41 317.34L1146.16 311.41L1145.67 305.49L1144.93 299.56L1143.95 293.64L1142.72 287.72L1141.26 281.79L1139.55 275.87L1137.6 269.94L1135.42 264.02L1133 258.09L1130.34 252.17L1127.46 246.24L1124.35 240.32L1121.02 234.39L1117.47 228.47L1113.7 222.55L1109.71 216.62L1105.52 210.7L1101.12 204.77L1096.52 198.85L1091.73 192.92L1086.75 187L1081.58 181.07L1076.22 175.15L1070.7 169.22L1065 163.3L1059.14 157.38L1053.12 151.45L1046.95 145.53L1040.63 139.6L1034.18 133.68L1027.59 127.75L1020.87 121.83L1014.03 115.9L1007.09 109.98L1000.03 104.05L992.88 98.13L985.64 92.21L978.31 86.28L970.9 80.36L963.43 74.43L955.89 68.51L948.3 62.58L940.66 56.66L932.99 50.73L925.28 44.81L917.55 38.88L909.8 32.96L902.05 27.03"/>
<path class="gl" d="M902.05 613.57L908.25 607.64L914.45 601.72L920.63 595.79L926.8 589.87L932.94 583.94L939.05 578.02L945.12 572.09L951.15 566.17L957.13 560.24L963.06 554.32L968.92 548.39L974.71 542.47L980.44 536.55L986.08 530.62L991.64 524.7L997.11 518.77L1002.48 512.85L1007.75 506.92L1012.92 501L1017.97 495.07L1022.91 489.15L1027.72 483.23L1032.41 477.3L1036.97 471.38L1041.39 465.45L1045.67 459.53L1049.81 453.6L1053.79 447.68L1057.63 441.75L1061.31 435.83L1064.83 429.9L1068.18 423.98L1071.37 418.06L1074.38 412.13L1077.23 406.21L1079.89 400.28L1082.38 394.36L1084.69 388.43L1086.81 382.51L1088.74 376.58L1090.49 370.66L1092.05 364.73L1093.42 358.81L1094.59 352.88L1095.57 346.96L1096.36 341.04L1096.95 335.11L1097.34 329.19L1097.54 323.26L1097.54 317.34L1097.34 311.41L1096.95 305.49L1096.36 299.56L1095.57 293.64L1094.59 287.72L1093.42 281.79L1092.05 275.87L1090.49 269.94L1088.74 264.02L1086.81 258.09L1084.69 252.17L1082.38 246.24L1079.89 240.32L1077.23 234.39L1074.38 228.47L1071.37 222.55L1068.18 216.62L1064.83 210.7L1061.31 204.77L1057.63 198.85L1053.79 192.92L1049.81 187L1045.67 181.07L1041.39 175.15L1036.97 169.22L1032.41 163.3L1027.72 157.38L1022.91 151.45L1017.97 145.53L1012.92 139.6L1007.75 133.68L1002.48 127.75L997.11 121.83L991.64 115.9L986.08 109.98L980.44 104.05L974.71 98.13L968.92 92.21L963.06 86.28L957.13 80.36L951.15 74.43L945.12 68.51L939.05 62.58L932.94 56.66L926.8 50.73L920.63 44.81L914.45 38.88L908.25 32.96L902.05 27.03"/>
<path class="gl" d="M902.05 613.57L906.7 607.64L911.35 601.72L915.99 595.79L920.61 589.87L925.22 583.94L929.8 578.02L934.35 572.09L938.88 566.17L943.36 560.24L947.8 554.32L952.2 548.39L956.55 542.47L960.84 536.55L965.07 530.62L969.24 524.7L973.34 518.77L977.37 512.85L981.33 506.92L985.2 501L988.99 495.07L992.69 489.15L996.3 483.23L999.82 477.3L1003.24 471.38L1006.55 465.45L1009.77 459.53L1012.87 453.6L1015.86 447.68L1018.73 441.75L1021.49 435.83L1024.13 429.9L1026.65 423.98L1029.04 418.06L1031.3 412.13L1033.43 406.21L1035.43 400.28L1037.3 394.36L1039.03 388.43L1040.62 382.51L1042.07 376.58L1043.38 370.66L1044.55 364.73L1045.57 358.81L1046.45 352.88L1047.19 346.96L1047.78 341.04L1048.22 335.11L1048.52 329.19L1048.66 323.26L1048.66 317.34L1048.52 311.41L1048.22 305.49L1047.78 299.56L1047.19 293.64L1046.45 287.72L1045.57 281.79L1044.55 275.87L1043.38 269.94L1042.07 264.02L1040.62 258.09L1039.03 252.17L1037.3 246.24L1035.43 240.32L1033.43 234.39L1031.3 228.47L1029.04 222.55L1026.65 216.62L1024.13 210.7L1021.49 204.77L1018.73 198.85L1015.86 192.92L1012.87 187L1009.77 181.07L1006.55 175.15L1003.24 169.22L999.82 163.3L996.3 157.38L992.69 151.45L988.99 145.53L985.2 139.6L981.33 133.68L977.37 127.75L973.34 121.83L969.24 115.9L965.07 109.98L960.84 104.05L956.55 98.13L952.2 92.21L947.8 86.28L943.36 80.36L938.88 74.43L934.35 68.51L929.8 62.58L925.22 56.66L920.61 50.73L915.99 44.81L911.35 38.88L906.7 32.96L902.05 27.03"/>
<path class="gl" d="M902.05 613.57L905.15 607.64L908.25 601.72L911.34 595.79L914.43 589.87L917.5 583.94L920.55 578.02L923.59 572.09L926.6 566.17L929.59 560.24L932.55 554.32L935.48 548.39L938.38 542.47L941.24 536.55L944.06 530.62L946.84 524.7L949.58 518.77L952.26 512.85L954.9 506.92L957.48 501L960.01 495.07L962.48 489.15L964.89 483.23L967.23 477.3L969.51 471.38L971.72 465.45L973.86 459.53L975.93 453.6L977.92 447.68L979.84 441.75L981.68 435.83L983.44 429.9L985.11 423.98L986.71 418.06L988.22 412.13L989.64 406.21L990.97 400.28L992.21 394.36L993.37 388.43L994.43 382.51L995.4 376.58L996.27 370.66L997.05 364.73L997.73 358.81L998.32 352.88L998.81 346.96L999.2 341.04L999.5 335.11L999.69 329.19L999.79 323.26L999.79 317.34L999.69 311.41L999.5 305.49L999.2 299.56L998.81 293.64L998.32 287.72L997.73 281.79L997.05 275.87L996.27 269.94L995.4 264.02L994.43 258.09L993.37 252.17L992.21 246.24L990.97 240.32L989.64 234.39L988.22 228.47L986.71 222.55L985.11 216.62L983.44 210.7L981.68 204.77L979.84 198.85L977.92 192.92L975.93 187L973.86 181.07L971.72 175.15L969.51 169.22L967.23 163.3L964.89 157.38L962.48 151.45L960.01 145.53L957.48 139.6L954.9 133.68L952.26 127.75L949.58 121.83L946.84 115.9L944.06 109.98L941.24 104.05L938.38 98.13L935.48 92.21L932.55 86.28L929.59 80.36L926.6 74.43L923.59 68.51L920.55 62.58L917.5 56.66L914.43 50.73L911.34 44.81L908.25 38.88L905.15 32.96L902.05 27.03"/>
<path class="gl" d="M902.05 613.57L903.6 607.64L905.15 601.72L906.7 595.79L908.24 589.87L909.77 583.94L911.3 578.02L912.82 572.09L914.33 566.17L915.82 560.24L917.3 554.32L918.77 548.39L920.22 542.47L921.65 536.55L923.06 530.62L924.45 524.7L925.81 518.77L927.16 512.85L928.48 506.92L929.77 501L931.03 495.07L932.26 489.15L933.47 483.23L934.64 477.3L935.78 471.38L936.88 465.45L937.96 459.53L938.99 453.6L939.99 447.68L940.94 441.75L941.86 435.83L942.74 429.9L943.58 423.98L944.38 418.06L945.13 412.13L945.84 406.21L946.51 400.28L947.13 394.36L947.71 388.43L948.24 382.51L948.72 376.58L949.16 370.66L949.55 364.73L949.89 358.81L950.18 352.88L950.43 346.96L950.63 341.04L950.77 335.11L950.87 329.19L950.92 323.26L950.92 317.34L950.87 311.41L950.77 305.49L950.63 299.56L950.43 293.64L950.18 287.72L949.89 281.79L949.55 275.87L949.16 269.94L948.72 264.02L948.24 258.09L947.71 252.17L947.13 246.24L946.51 240.32L945.84 234.39L945.13 228.47L944.38 222.55L943.58 216.62L942.74 210.7L941.86 204.77L940.94 198.85L939.99 192.92L938.99 187L937.96 181.07L936.88 175.15L935.78 169.22L934.64 163.3L933.47 157.38L932.26 151.45L931.03 145.53L929.77 139.6L928.48 133.68L927.16 127.75L925.81 121.83L924.45 115.9L923.06 109.98L921.65 104.05L920.22 98.13L918.77 92.21L917.3 86.28L915.82 80.36L914.33 74.43L912.82 68.51L911.3 62.58L909.77 56.66L908.24 50.73L906.7 44.81L905.15 38.88L903.6 32.96L902.05 27.03"/>
<path d="M680.1 331.3L659.9 343.1L618 366.7L581.9 386.9L558.1 397.3" fill="none" stroke="#8c8c8c" stroke-opacity="0.5" stroke-width="1.389" stroke-dasharray="1.389 2.292"/>
<path d="M718.5 235.2L718.8 225L720 212L723.3 195.6L728.5 180L734.4 164.4L745.6 133.3L752 114L754.6 104L754 97.5L748.7 95.3L736.7 95L719.3 95.6" fill="none" stroke="#8c8c8c" stroke-opacity="0.5" stroke-width="1.389" stroke-dasharray="1.389 2.292"/>
<path d="M986.1 264.4L995.6 254.4L1005.6 243.3L1016.7 232.8L1027 222L1053.3 196L1075.6 181L1097.8 172.8L1120 169.3L1142.2 169.6L1175.6 173.3L1208.9 180L1253.3 192.2L1297.8 206.7L1306.7 210" fill="none" stroke="#8c8c8c" stroke-opacity="0.5" stroke-width="1.389" stroke-dasharray="1.389 2.292"/>
<path d="M783.3 162.4L777.1 175.8L770.9 188.2L764.7 203.3L758.4 220.2L753.3 240.5L751.1 251.4L749 263L748.4 270L748.3 278.3" fill="none" stroke="#4ec36b" stroke-width="1.389" stroke-dasharray="1.389 2.292"/>
<path d="M744.83 278.3h6.944M748.3 274.83v6.944" fill="none" stroke="#f00" stroke-width="1.389"/>
<path d="M806.4 179.3L797.6 189.1L788.7 199.8L779.8 211.3L771.8 223.8L763.8 236.2L757.6 246.9L752.2 256.4L748.9 262.8L745.3 269.2L743.3 273.6" fill="none" stroke="#4ec36b" stroke-width="1.389" stroke-dasharray="1.389 2.292"/>
<path d="M739.83 273.6h6.944M743.3 270.13v6.944" fill="none" stroke="#f00" stroke-width="1.389"/>
<path d="M760.93 252.16L757.76 252.37L754.51 252.99L751.26 254.02L748.05 255.42L744.95 257.18L742.01 259.26L739.29 261.63L736.86 264.25L734.75 267.06L733 270.02L731.66 273.09L730.75 276.2L730.28 279.32L730.26 282.39L730.7 285.35L731.56 288.18L732.84 290.81L734.5 293.21L736.52 295.35L738.84 297.18L741.42 298.68L744.21 299.83L747.17 300.6L750.23 300.99L753.35 300.99L756.48 300.6L759.57 299.83L762.58 298.68L765.45 297.18L768.15 295.35L770.64 293.21L772.89 290.81L774.87 288.18L776.55 285.35L777.92 282.39L778.94 279.32L779.61 276.2L779.92 273.09L779.86 270.02L779.43 267.06L778.63 264.25L777.47 261.63L775.97 259.26L774.13 257.18L771.98 255.42L769.56 254.02L766.88 252.99L763.99 252.37L760.93 252.16Z" fill="none" stroke="#4ec36b" stroke-width="2.0833" stroke-linejoin="round"/>
<path d="M680.1 331.3L659.9 343.1L618 366.7" fill="none" stroke="#6e6e6e" stroke-opacity="0.6" stroke-width="1.2"/>
<path d="M680.1 331.3L696.7 321.9L738.6 299.9" fill="none" stroke="#808080" stroke-width="2.1" stroke-linecap="butt"/>
<rect x="738" y="299" width="2" height="2" fill="#9a9a9a"/>
<path d="M718.5 235.2L718.5 254.3L720.1 273.4" fill="none" stroke="#8c8c8c" stroke-width="1.39" stroke-linecap="butt"/>
<rect x="719" y="272" width="2" height="2" fill="#9a9a9a"/>
<path d="M935.6 319.8L938.3 314.4L945.6 308.9L951.1 302.2L954.4 297.2L961.1 291.7L967.8 286.1L974.4 277.8L981.7 271.1L986.1 264.4" fill="none" stroke="#8c8c8c" stroke-width="1.39" stroke-linecap="butt"/>
<rect x="935" y="319" width="2" height="2" fill="#9a9a9a"/>
<path d="M783.3 162.4L802.9 131" fill="none" stroke="#4ec36b" stroke-width="1.389" stroke-linecap="square"/>
<rect x="802" y="130" width="2" height="2" fill="#ff6347"/>
<path d="M806.4 179.3L822.8 160.1" fill="none" stroke="#4ec36b" stroke-width="1.389" stroke-linecap="square"/>
<rect x="822" y="159" width="2" height="2" fill="#ff6347"/>
</g>
<text class="g" x="889 897 903" y="624">−90</text><text class="gs" x="911" y="619.17">∘</text>
<text class="g" x="889 897 903" y="526">−60</text><text class="gs" x="911" y="521.17">∘</text>
<text class="g" x="889 897 903" y="428">−30</text><text class="gs" x="911" y="423.17">∘</text>
<text class="g" x="893 901" y="330">+0</text><text class="gs" x="908" y="325.17">∘</text>
<text class="g" x="889 897 903" y="221">+30</text><text class="gs" x="911" y="216.17">∘</text>
<text class="g" x="889 897 903" y="123">+60</text><text class="gs" x="911" y="118.17">∘</text>
<text class="g" x="889 897 903" y="25">+90</text><text class="gs" x="911" y="20.17">∘</text>
<text class="g" x="893 901" y="330">+0</text><text class="gs" x="908" y="325.17">∘</text>
<text class="g" x="792 800 806" y="330">+30</text><text class="gs" x="814" y="325.17">∘</text>
<text class="g" x="694 702 708" y="330">+60</text><text class="gs" x="716" y="325.17">∘</text>
<text class="g" x="596 604 610" y="330">+90</text><text class="gs" x="618" y="325.17">∘</text>
<text class="g" x="495 503 509 515" y="330">+120</text><text class="gs" x="523" y="325.17">∘</text>
<text class="g" x="398 406 412 418" y="330">+150</text><text class="gs" x="426" y="325.17">∘</text>
<text class="g" x="300 308 314 320" y="330">+180</text><text class="gs" x="328" y="325.17">∘</text>
<text class="g" x="1473 1481 1487 1493" y="330">+180</text><text class="gs" x="1501" y="325.17">∘</text>
<text class="g" x="1375 1383 1389 1395" y="330">+210</text><text class="gs" x="1403" y="325.17">∘</text>
<text class="g" x="1277 1285 1291 1297" y="330">+240</text><text class="gs" x="1305" y="325.17">∘</text>
<text class="g" x="1180 1188 1194 1200" y="330">+270</text><text class="gs" x="1208" y="325.17">∘</text>
<text class="g" x="1082 1090 1096 1102" y="330">+300</text><text class="gs" x="1110" y="325.17">∘</text>
<text class="g" x="984 992 998 1004" y="330">+330</text><text class="gs" x="1012" y="325.17">∘</text>
<text class="s3" x="745.984 752.162 757.949" y="280" xml:space="preserve">STA</text>
<text class="m" x="315.945 323.182 331.794 339.906 348.518 356.879" y="30" xml:space="preserve">MX0001</text>
<text class="m" x="314.945 323.432 331.669 339.906 348.768 356.879 365.241 373.853 381.965 390.577 398.689 407.301 415.413 424.024 432.136 440.748 449.11 457.222 465.834 473.946 482.558 490.92 499.281 507.643 516.005 524.367 532.729 541.091 549.453 557.815 566.176 574.663 582.9 591.262 599.749 608.236 616.473 624.71" y="43" xml:space="preserve">Beg: 20251030 01:05:29 (sol = 216.51°)</text>
<text class="m" x="314.945 323.432 331.669 339.906 348.768 356.879 365.241 373.853 381.965 390.577 398.689 407.301 415.413 424.024 432.136 440.748 449.11 457.472 465.834 473.946 482.558 490.92 499.281 507.643 516.005 524.367 532.729 541.091 549.453 557.815 566.176 574.663 582.9 591.262 599.749 608.236 616.473 624.71" y="57" xml:space="preserve">End: 20251030 06:26:17 (sol = 216.73°)</text>
<text class="m" x="315.63 323.492 331.729 339.966 348.453 357.064 365.301 373.538 382.025 390.262 398.749 406.986 415.473 423.709 432.196 440.558 449.045 457.157 465.769 474.006 482.618 490.98 499.341 507.453 516.065 524.302 532.789 540.901 549.513 557.625 566.236 574.723 582.96 591.322 599.809 608.046 616.408 625.02" y="69" xml:space="preserve">--------------------------------------</text>
<text class="m" x="315.12 323.357 331.719 340.081 348.443 356.679" y="82" xml:space="preserve">...: 5</text>
<text class="m" x="315.12 323.482 331.844 339.956 348.568 356.929" y="95" xml:space="preserve">STA: 2</text>
<text class="mo" transform="translate(148.54 643.275) rotate(-90)" x="-53.824 -35.822 -19.071" y="0">APR</text>
<text class="mo" transform="translate(293.505 646.03) rotate(-90)" x="-56.042 -33.075 -16.073" y="0">MAY</text>
<text class="mo" transform="translate(435.495 641.725) rotate(-90)" x="-47.293 -40.101 -19.769" y="0">JUN</text>
<text class="mo" transform="translate(575.575 642.11) rotate(-90)" x="-41.87 -34.678 -14.346" y="0">JUL</text>
<text class="mo" transform="translate(722.58 644.865) rotate(-90)" x="-58.159 -40.157 -19.825" y="0">AUG</text>
<text class="mo" transform="translate(871.52 644.255) rotate(-90)" x="-50.865 -34.107 -16.556" y="0">SEP</text>
<text class="mo" transform="translate(1015.56 644.88) rotate(-90)" x="-56.248 -35.384 -16.238" y="0">OCT</text>
<text class="mo" transform="translate(1168.59 645.85) rotate(-90)" x="-59.166 -39.512 -18.272" y="0">NOV</text>
<text class="mo" transform="translate(1317.62 644.855) rotate(-90)" x="-57.187 -36.672 -19.246" y="0">DEC</text>
<text class="mo" transform="translate(1468.5 640.785) rotate(-90)" x="-46.259 -39.567 -20.564" y="0">JAN</text>
<text class="mo" transform="translate(1627.6 645.33) rotate(-90)" x="-51.676 -36.698 -19.022" y="0">FEB</text>
<text class="mo" transform="translate(1765.605 645.1) rotate(-90)" x="-60.94 -37.973 -18.971" y="0">MAR</text>
<g clip-path="url(#cb)">
<path d="M1081.5 842.5V641.5" fill="none" stroke="#f00" stroke-width="1.389" stroke-dasharray="5.139 2.222"/>
<path d="M1082.5 842.5V641.5" fill="none" stroke="#f00" stroke-width="1.389" stroke-dasharray="5.139 2.222"/>
<path d="M105.92 831h23.17v6h-23.17zM164.92 831h180.17v6h-180.17zM365.92 831h259.17v6h-259.17zM634.92 831h151.17v6h-151.17zM806.92 831h92.17v6h-92.17zM919.92 831h53.17v6h-53.17zM983.92 831h82.17v6h-82.17zM1081.92 831h121.17v6h-121.17zM1243.92 831h82.17v6h-82.17zM1336.92 831h18.17v6h-18.17zM1380.92 831h63.17v6h-63.17zM1458.92 831h53.17v6h-53.17zM1522.92 831h24.17v6h-24.17zM1723.92 831h24.17v6h-24.17zM1757.92 831h24.17v6h-24.17z" fill="#bddf26" fill-opacity="0.0833"/>
<path d="M105.92 832h23.17v4h-23.17zM164.92 832h180.17v4h-180.17zM365.92 832h259.17v4h-259.17zM634.92 832h151.17v4h-151.17zM806.92 832h92.17v4h-92.17zM919.92 832h53.17v4h-53.17zM983.92 832h82.17v4h-82.17zM1081.92 832h121.17v4h-121.17zM1243.92 832h82.17v4h-82.17zM1336.92 832h18.17v4h-18.17zM1380.92 832h63.17v4h-63.17zM1458.92 832h53.17v4h-53.17zM1522.92 832h24.17v4h-24.17zM1723.92 832h24.17v4h-24.17zM1757.92 832h24.17v4h-24.17z" fill="#bddf26"/>
<path d="M164.92 815h23.17v6h-23.17zM222.92 815h63.17v6h-63.17zM311.92 815h28.17v6h-28.17zM365.92 815h126.17v6h-126.17zM507.92 815h146.17v6h-146.17zM703.92 815h33.17v6h-33.17zM772.92 815h72.17v6h-72.17zM870.92 815h117.17v6h-117.17zM1002.92 815h14.17v6h-14.17zM1061.92 815h151.17v6h-151.17zM1243.92 815h23.17v6h-23.17zM1292.92 815h23.17v6h-23.17zM1341.92 815h23.17v6h-23.17zM1385.92 815h43.17v6h-43.17zM1458.92 815h24.17v6h-24.17zM1547.92 815h23.17v6h-23.17z" fill="#81d34d" fill-opacity="0.0833"/>
<path d="M164.92 816h23.17v4h-23.17zM222.92 816h63.17v4h-63.17zM311.92 816h28.17v4h-28.17zM365.92 816h126.17v4h-126.17zM507.92 816h146.17v4h-146.17zM703.92 816h33.17v4h-33.17zM772.92 816h72.17v4h-72.17zM870.92 816h117.17v4h-117.17zM1002.92 816h14.17v4h-14.17zM1061.92 816h151.17v4h-151.17zM1243.92 816h23.17v4h-23.17zM1292.92 816h23.17v4h-23.17zM1341.92 816h23.17v4h-23.17zM1385.92 816h43.17v4h-43.17zM1458.92 816h24.17v4h-24.17zM1547.92 816h23.17v4h-23.17z" fill="#81d34d"/>
<path d="M164.92 799h23.17v6h-23.17zM257.92 799h229.17v6h-229.17zM507.92 799h107.17v6h-107.17zM625.92 799h92.17v6h-92.17zM728.92 799h97.17v6h-97.17zM948.92 799h200.17v6h-200.17zM1159.92 799h88.17v6h-88.17zM1257.92 799h186.17v6h-186.17zM1458.92 799h24.17v6h-24.17zM1551.92 799h24.17v6h-24.17z" fill="#4ec36b" fill-opacity="0.0833"/>
<path d="M164.92 800h23.17v4h-23.17zM257.92 800h229.17v4h-229.17zM507.92 800h107.17v4h-107.17zM625.92 800h92.17v4h-92.17zM728.92 800h97.17v4h-97.17zM948.92 800h200.17v4h-200.17zM1159.92 800h88.17v4h-88.17zM1257.92 800h186.17v4h-186.17zM1458.92 800h24.17v4h-24.17zM1551.92 800h24.17v4h-24.17z" fill="#4ec36b"/>
<path d="M193.92 782h24.17v6h-24.17zM320.92 782h186.17v6h-186.17zM517.92 782h23.17v6h-23.17zM556.92 782h126.17v6h-126.17zM806.92 782h24.17v6h-24.17zM953.92 782h19.17v6h-19.17zM987.92 782h137.17v6h-137.17zM1154.92 782h63.17v6h-63.17zM1243.92 782h23.17v6h-23.17zM1316.92 782h24.17v6h-24.17zM1395.92 782h23.17v6h-23.17zM1463.92 782h186.17v6h-186.17z" fill="#2ab07f" fill-opacity="0.0833"/>
<path d="M193.92 783h24.17v4h-24.17zM320.92 783h186.17v4h-186.17zM517.92 783h23.17v4h-23.17zM556.92 783h126.17v4h-126.17zM806.92 783h24.17v4h-24.17zM953.92 783h19.17v4h-19.17zM987.92 783h137.17v4h-137.17zM1154.92 783h63.17v4h-63.17zM1243.92 783h23.17v4h-23.17zM1316.92 783h24.17v4h-24.17zM1395.92 783h23.17v4h-23.17zM1463.92 783h186.17v4h-186.17z" fill="#2ab07f"/>
<path d="M340.92 766h29.17v6h-29.17zM409.92 766h38.17v6h-38.17zM468.92 766h23.17v6h-23.17zM526.92 766h19.17v6h-19.17zM561.92 766h28.17v6h-28.17zM615.92 766h33.17v6h-33.17zM958.92 766h29.17v6h-29.17zM1061.92 766h24.17v6h-24.17zM1100.92 766h24.17v6h-24.17zM1159.92 766h34.17v6h-34.17zM1247.92 766h24.17v6h-24.17zM1424.92 766h87.17v6h-87.17z" fill="#1e9b8a" fill-opacity="0.0833"/>
<path d="M340.92 767h29.17v4h-29.17zM409.92 767h38.17v4h-38.17zM468.92 767h23.17v4h-23.17zM526.92 767h19.17v4h-19.17zM561.92 767h28.17v4h-28.17zM615.92 767h33.17v4h-33.17zM958.92 767h29.17v4h-29.17zM1061.92 767h24.17v4h-24.17zM1100.92 767h24.17v4h-24.17zM1159.92 767h34.17v4h-34.17zM1247.92 767h24.17v4h-24.17zM1424.92 767h87.17v4h-87.17z" fill="#1e9b8a"/>
<path d="M419.92 749h23.17v6h-23.17zM531.92 749h24.17v6h-24.17zM566.92 749h23.17v6h-23.17zM620.92 749h121.17v6h-121.17zM968.92 749h166.17v6h-166.17zM1184.92 749h161.17v6h-161.17zM1468.92 749h24.17v6h-24.17z" fill="#25858e" fill-opacity="0.0833"/>
<path d="M419.92 750h23.17v4h-23.17zM531.92 750h24.17v4h-24.17zM566.92 750h23.17v4h-23.17zM620.92 750h121.17v4h-121.17zM968.92 750h166.17v4h-166.17zM1184.92 750h161.17v4h-161.17zM1468.92 750h24.17v4h-24.17z" fill="#25858e"/>
<path d="M428.92 733h24.17v6h-24.17zM575.92 733h157.17v6h-157.17zM992.92 733h112.17v6h-112.17zM1115.92 733h107.17v6h-107.17zM1262.92 733h29.17v6h-29.17zM1488.92 733h23.17v6h-23.17z" fill="#2d708e" fill-opacity="0.0833"/>
<path d="M428.92 734h24.17v4h-24.17zM575.92 734h157.17v4h-157.17zM992.92 734h112.17v4h-112.17zM1115.92 734h107.17v4h-107.17zM1262.92 734h29.17v4h-29.17zM1488.92 734h23.17v4h-23.17z" fill="#2d708e"/>
<path d="M590.92 717h24.17v6h-24.17zM654.92 717h117.17v6h-117.17zM1071.92 717h171.17v6h-171.17zM1262.92 717h24.17v6h-24.17z" fill="#375a8c" fill-opacity="0.0833"/>
<path d="M590.92 718h24.17v4h-24.17zM654.92 718h117.17v4h-117.17zM1071.92 718h171.17v4h-171.17zM1262.92 718h24.17v4h-24.17z" fill="#375a8c"/>
<path d="M595.92 700h137.17v6h-137.17zM1090.92 700h29.17v6h-29.17zM1198.92 700h24.17v6h-24.17zM1272.92 700h53.17v6h-53.17z" fill="#424086" fill-opacity="0.0833"/>
<path d="M595.92 701h137.17v4h-137.17zM1090.92 701h29.17v4h-29.17zM1198.92 701h24.17v4h-24.17zM1272.92 701h53.17v4h-53.17z" fill="#424086"/>
<path d="M1110.92 684h24.17v6h-24.17z" fill="#482475" fill-opacity="0.0833"/>
<path d="M1110.92 685h24.17v4h-24.17z" fill="#482475"/>
</g>
<text class="s2" x="106.941 113.227 120.405" y="832">KSE</text>
<text class="s2" x="244.893 250.913 256.7" y="832">ETA</text>
<text class="s2" x="482.972 490.159 497.895" y="832">NZC</text>
<text class="s2" x="698.892 706.454 714.635" y="832">NDA</text>
<text class="s2" x="842.961 848.889 855.964" y="832">SPE</text>
<text class="s2" x="933.915 940.641 948.486" y="832">ARD</text>
<text class="s2" x="1013.92 1019.94 1028.675" y="832">EGE</text>
<text class="s2" x="1131.979 1139.166 1145.203" y="832">NTA</text>
<text class="s2" x="1270.973 1279.684 1288.43" y="832">MON</text>
<text class="s2" x="1331.976 1340.233 1347.954" y="832">URS</text>
<text class="s2" x="1400.896 1407.746 1415.976" y="832">AHY</text>
<text class="s2" x="1472.905 1480.64 1488.648" y="832">GUM</text>
<text class="s2" x="1523.941 1531.687 1540.167" y="832">OHY</text>
<text class="s2" x="1724.971 1731.708 1739.938" y="832">XHE</text>
<text class="s2" x="1760.922 1766.943 1774.669" y="832">EVI</text>
<text class="s2" x="164.877 170.728 178.454" y="815">AVB</text>
<text class="s2" x="245.883 251.903 256.718" y="815">ELY</text>
<text class="s2" x="311.987 318.745 326.471" y="815">CAM</text>
<text class="s2" x="420.891 427.194 434.247" y="815">SSG</text>
<text class="s2" x="567.99 573.69 581.448" y="815">PCA</text>
<text class="s2" x="708.996 715.722 723.729" y="815">AUD</text>
<text class="s2" x="796.97 803.696 811.703" y="815">AUR</text>
<text class="s2" x="919.969 927.4 934.703" y="815">DSX</text>
<text class="s2" x="997.994 1005.739 1013.497" y="815">OCU</text>
<text class="s2" x="1125.961 1133.707 1140.727" y="815">OER</text>
<text class="s2" x="1242.934 1250.489 1257.651" y="815">DKD</text>
<text class="s2" x="1292.988 1300.419 1307.722" y="815">DSV</text>
<text class="s2" x="1343.929 1350.655 1355.47" y="815">ALY</text>
<text class="s2" x="1399.954 1402.231 1408.421" y="815">JLE</text>
<text class="s2" x="1460.887 1466.939 1474.698" y="815">SCC</text>
<text class="s2" x="1548.896 1554.412 1561.433" y="815">FEV</text>
<text class="s2" x="166.931 170.746 177.408" y="799">LYR</text>
<text class="s2" x="362.979 365.131 374.718" y="799">JMC</text>
<text class="s2" x="550.953 553.23 559.93" y="799">JPE</text>
<text class="s2" x="660.944 665.894 673.745" y="799">PAU</text>
<text class="s2" x="764.881 772.442 775.719" y="799">NIA</text>
<text class="s2" x="1039.903 1046.205 1051.992" y="799">STA</text>
<text class="s2" x="1192.941 1200.128 1209.248" y="799">NOO</text>
<text class="s2" x="1340.958 1347.716 1356.461" y="799">COM</text>
<text class="s2" x="1458.987 1466.174 1473.932" y="799">NCC</text>
<text class="s2" x="1552.938 1558.454 1565.475" y="799">FED</text>
<text class="s2" x="195.985 203.465 210.941" y="783">HVI</text>
<text class="s2" x="402.932 409.658 417.378" y="783">ARI</text>
<text class="s2" x="518.883 525.186 532.673" y="783">SZC</text>
<text class="s2" x="606.881 613.639 621.49" y="783">CAP</text>
<text class="s2" x="806.929 814.49 822.498" y="783">NUE</text>
<text class="s2" x="949.881 957.627 965.385" y="783">OCT</text>
<text class="s2" x="1049.936 1057.681 1065.401" y="783">ORI</text>
<text class="s2" x="1173.923 1180.649 1190.235" y="783">AMO</text>
<text class="s2" x="1243.875 1251.431 1258.131" y="783">DPC</text>
<text class="s2" x="1319.906 1326.642 1334.243" y="783">XVI</text>
<text class="s2" x="1395.923 1403.669 1411.676" y="783">QUA</text>
<text class="s2" x="1547.976 1554.952 1562.427" y="783">AAN</text>
<text class="s2" x="341.911 347.698 355.423" y="766">TAH</text>
<text class="s2" x="422.945 425.222 432.242" y="766">JEA</text>
<text class="s2" x="473.897 476.174 479.451" y="766">JIP</text>
<text class="s2" x="528.897 534.722 541.422" y="766">PPS</text>
<text class="s2" x="567.973 574.46 582.468" y="766">ZCS</text>
<text class="s2" x="620.966 628.701 637.132" y="766">GDR</text>
<text class="s2" x="958.882 966.438 973.658" y="766">DRA</text>
<text class="s2" x="1061.936 1066.626 1074.884" y="766">LUM</text>
<text class="s2" x="1101.95 1108.67 1115.496" y="766">RPU</text>
<text class="s2" x="1164.909 1171.696 1180.176" y="766">THA</text>
<text class="s2" x="1248.979 1254.679 1261.982" y="766">PSU</text>
<text class="s2" x="1459.98 1465.717 1473.725" y="766">XCB</text>
<text class="s2" x="422.942 425.218 432.439" y="750">JRC</text>
<text class="s2" x="532.963 539.721 547.447" y="750">CAN</text>
<text class="s2" x="567.908 572.424 579.9" y="750">FAN</text>
<text class="s2" x="670.914 676.739 683.635" y="750">PER</text>
<text class="s2" x="1038.88 1045.638 1051.675" y="750">CTA</text>
<text class="s2" x="1252.923 1260.403 1267.19" y="750">HYD</text>
<text class="s2" x="1468.94 1475.676 1483.684" y="750">XUM</text>
<text class="s2" x="429.891 436.649 445.395" y="733">COR</text>
<text class="s2" x="645.877 652.18 660.486" y="733">SDA</text>
<text class="s2" x="1039.941 1045.131 1054.968" y="733">LMI</text>
<text class="s2" x="1155.903 1161.218 1168.239" y="733">LEO</text>
<text class="s2" x="1263.909 1269.93 1278.41" y="733">EHY</text>
<text class="s2" x="1488.929 1494.949 1502.707" y="733">ECV</text>
<text class="s2" x="593.957 596.234 603.721" y="717">JXA</text>
<text class="s2" x="703.939 709.475 717.233" y="717">KCG</text>
<text class="s2" x="1144.883 1151.734 1159.921" y="717">AND</text>
<text class="s2" x="1262.899 1270.205 1277.931" y="717">DAD</text>
<text class="s2" x="657.927 663.947 671.668" y="701">ERI</text>
<text class="s2" x="1097.933 1103.986 1110.426" y="701">SLD</text>
<text class="s2" x="1199.938 1207.683 1215.403" y="701">ORS</text>
<text class="s2" x="1286.88 1294.74 1301.635" y="701">GEM</text>
<text class="s2" x="1110.978 1116.889 1125.147" y="684">KUM</text>
<path d="M113 834H121M117 830V838M241 834H249M245 830V838M511 834H519M515 830V838M707 834H715M711 830V838M833 834H841M837 830V838M962 834H970M966 830V838M986 834H994M990 830V838M1116 834H1124M1120 830V838M1295 834H1303M1299 830V838M1342 834H1350M1346 830V838M1413 834H1421M1417 830V838M1482 834H1490M1486 830V838M1531 834H1539M1535 830V838M1732 834H1740M1736 830V838M1766 834H1774M1770 830V838M172 818H180M176 814V822M256 818H264M260 814V822M323 818H331M327 814V822M437 818H445M441 814V822M599 818H607M603 814V822M717 818H725M721 814V822M793 818H801M797 814V822M939 818H947M943 814V822M1006 818H1014M1010 814V822M1153 818H1161M1157 814V822M1251 818H1259M1255 814V822M1300 818H1308M1304 814V822M1349 818H1357M1353 814V822M1403 818H1411M1407 814V822M1467 818H1475M1471 814V822M1555 818H1563M1559 814V822M174 802H182M178 798V806M378 802H386M382 798V806M545 802H553M549 798V806M682 802H690M686 798V806M741 802H749M745 798V806M1075 802H1083M1079 798V806M1217 802H1225M1221 798V806M1305 802H1313M1309 798V806M1467 802H1475M1471 798V806M1560 802H1568M1564 798V806M202 785H210M206 781V789M400 785H408M404 781V789M525 785H533M529 781V789M639 785H647M643 781V789M815 785H823M819 781V789M959 785H967M963 781V789M1040 785H1048M1044 781V789M1188 785H1196M1192 781V789M1251 785H1259M1255 781V789M1325 785H1333M1329 781V789M1403 785H1411M1407 781V789M1546 785H1554M1550 781V789M356 769H364M360 765V773M426 769H434M430 765V773M476 769H484M480 765V773M535 769H543M539 765V773M571 769H579M575 765V773M631 769H639M635 765V773M974 769H982M978 765V773M1070 769H1078M1074 765V773M1109 769H1117M1113 765V773M1178 769H1186M1182 765V773M1256 769H1264M1260 765V773M1467 769H1475M1471 765V773M427 752H435M431 748V756M540 752H548M544 748V756M574 752H582M578 748V756M704 752H712M708 748V756M1094 752H1102M1098 748V756M1271 752H1279M1275 748V756M1477 752H1485M1481 748V756M437 736H445M441 732V740M631 736H639M635 732V740M1039 736H1047M1043 732V740M1168 736H1176M1172 732V740M1275 736H1283M1279 732V740M1497 736H1505M1501 732V740M599 720H607M603 716V724M727 720H735M731 716V724M1188 720H1196M1192 716V724M1271 720H1279M1275 716V724M687 703H695M691 699V707M1102 703H1110M1106 699V707M1207 703H1215M1211 699V707M1300 703H1308M1304 699V707M1119 687H1127M1123 683V691" fill="none" stroke="#fff" stroke-opacity="0.0417" stroke-width="4"/>
<path d="M113 834H121M117 830V838M241 834H249M245 830V838M511 834H519M515 830V838M707 834H715M711 830V838M833 834H841M837 830V838M962 834H970M966 830V838M986 834H994M990 830V838M1116 834H1124M1120 830V838M1295 834H1303M1299 830V838M1342 834H1350M1346 830V838M1413 834H1421M1417 830V838M1482 834H1490M1486 830V838M1531 834H1539M1535 830V838M1732 834H1740M1736 830V838M1766 834H1774M1770 830V838M172 818H180M176 814V822M256 818H264M260 814V822M323 818H331M327 814V822M437 818H445M441 814V822M599 818H607M603 814V822M717 818H725M721 814V822M793 818H801M797 814V822M939 818H947M943 814V822M1006 818H1014M1010 814V822M1153 818H1161M1157 814V822M1251 818H1259M1255 814V822M1300 818H1308M1304 814V822M1349 818H1357M1353 814V822M1403 818H1411M1407 814V822M1467 818H1475M1471 814V822M1555 818H1563M1559 814V822M174 802H182M178 798V806M378 802H386M382 798V806M545 802H553M549 798V806M682 802H690M686 798V806M741 802H749M745 798V806M1075 802H1083M1079 798V806M1217 802H1225M1221 798V806M1305 802H1313M1309 798V806M1467 802H1475M1471 798V806M1560 802H1568M1564 798V806M202 785H210M206 781V789M400 785H408M404 781V789M525 785H533M529 781V789M639 785H647M643 781V789M815 785H823M819 781V789M959 785H967M963 781V789M1040 785H1048M1044 781V789M1188 785H1196M1192 781V789M1251 785H1259M1255 781V789M1325 785H1333M1329 781V789M1403 785H1411M1407 781V789M1546 785H1554M1550 781V789M356 769H364M360 765V773M426 769H434M430 765V773M476 769H484M480 765V773M535 769H543M539 765V773M571 769H579M575 765V773M631 769H639M635 765V773M974 769H982M978 765V773M1070 769H1078M1074 765V773M1109 769H1117M1113 765V773M1178 769H1186M1182 765V773M1256 769H1264M1260 765V773M1467 769H1475M1471 765V773M427 752H435M431 748V756M540 752H548M544 748V756M574 752H582M578 748V756M704 752H712M708 748V756M1094 752H1102M1098 748V756M1271 752H1279M1275 748V756M1477 752H1485M1481 748V756M437 736H445M441 732V740M631 736H639M635 732V740M1039 736H1047M1043 732V740M1168 736H1176M1172 732V740M1275 736H1283M1279 732V740M1497 736H1505M1501 732V740M599 720H607M603 716V724M727 720H735M731 716V724M1188 720H1196M1192 716V724M1271 720H1279M1275 716V724M687 703H695M691 699V707M1102 703H1110M1106 699V707M1207 703H1215M1211 699V707M1300 703H1308M1304 699V707M1119 687H1127M1123 683V691" fill="none" stroke="#fff" stroke-width="2"/>
<g clip-path="url(#cb)">
<path class="ml" d="M74 842V641"/>
<path class="ml" d="M218 842V641"/>
<path class="ml" d="M365 842V641"/>
<path class="ml" d="M505 842V641"/>
<path class="ml" d="M650 842V641"/>
<path class="ml" d="M797 842V641"/>
<path class="ml" d="M940 842V641"/>
<path class="ml" d="M1091 842V641"/>
<path class="ml" d="M1239 842V641"/>
<path class="ml" d="M1394 842V641"/>
<path class="ml" d="M1548 842V641"/>
<path class="ml" d="M1687 842V641"/>
</g>
<path d="M19 641.5H1786M19 842.5H1786M19.5 641V843M1785.5 641V843" fill="none" stroke="#fff" stroke-opacity="0.0556" stroke-width="3" stroke-linecap="butt"/>
<path d="M19 641.5H1786M19 842.5H1786M19.5 641V843M1785.5 641V843" fill="none" stroke="#fff" stroke-width="1" stroke-linecap="butt"/>
<path d="M19.5 842.5V847.5M265.5 842.5V847.5M510.5 842.5V847.5M755.5 842.5V847.5M1000.5 842.5V847.5M1246.5 842.5V847.5M1491.5 842.5V847.5M1736.5 842.5V847.5" fill="none" stroke="#fff" stroke-width="1.111"/>
<text class="t2" x="15.902" y="862" xml:space="preserve">0</text>
<text class="t2" x="255.899 263.736" y="862" xml:space="preserve">50</text>
<text class="t2" x="496.956 504.793 513.38" y="862" xml:space="preserve">100</text>
<text class="t2" x="741.972 749.809 758.395" y="862" xml:space="preserve">150</text>
<text class="t2" x="986.983 995.694 1004.531" y="862" xml:space="preserve">200</text>
<text class="t2" x="1231.979 1240.69 1249.527" y="862" xml:space="preserve">250</text>
<text class="t2" x="1477.919 1485.756 1494.592" y="862" xml:space="preserve">300</text>
<text class="t2" x="1722.945 1730.782 1739.618" y="862" xml:space="preserve">350</text>
<text class="t2" x="829.109 837.675 846.173 850.281 858.793 864.503 868.668 872.777 881.274 890.077 898.643 902.752 908.198 917 925.816 934.361 938.776 944.195 953.011 961.681 970.497" y="882" xml:space="preserve">Solar longitude (deg)</text>
</svg></body></html>
